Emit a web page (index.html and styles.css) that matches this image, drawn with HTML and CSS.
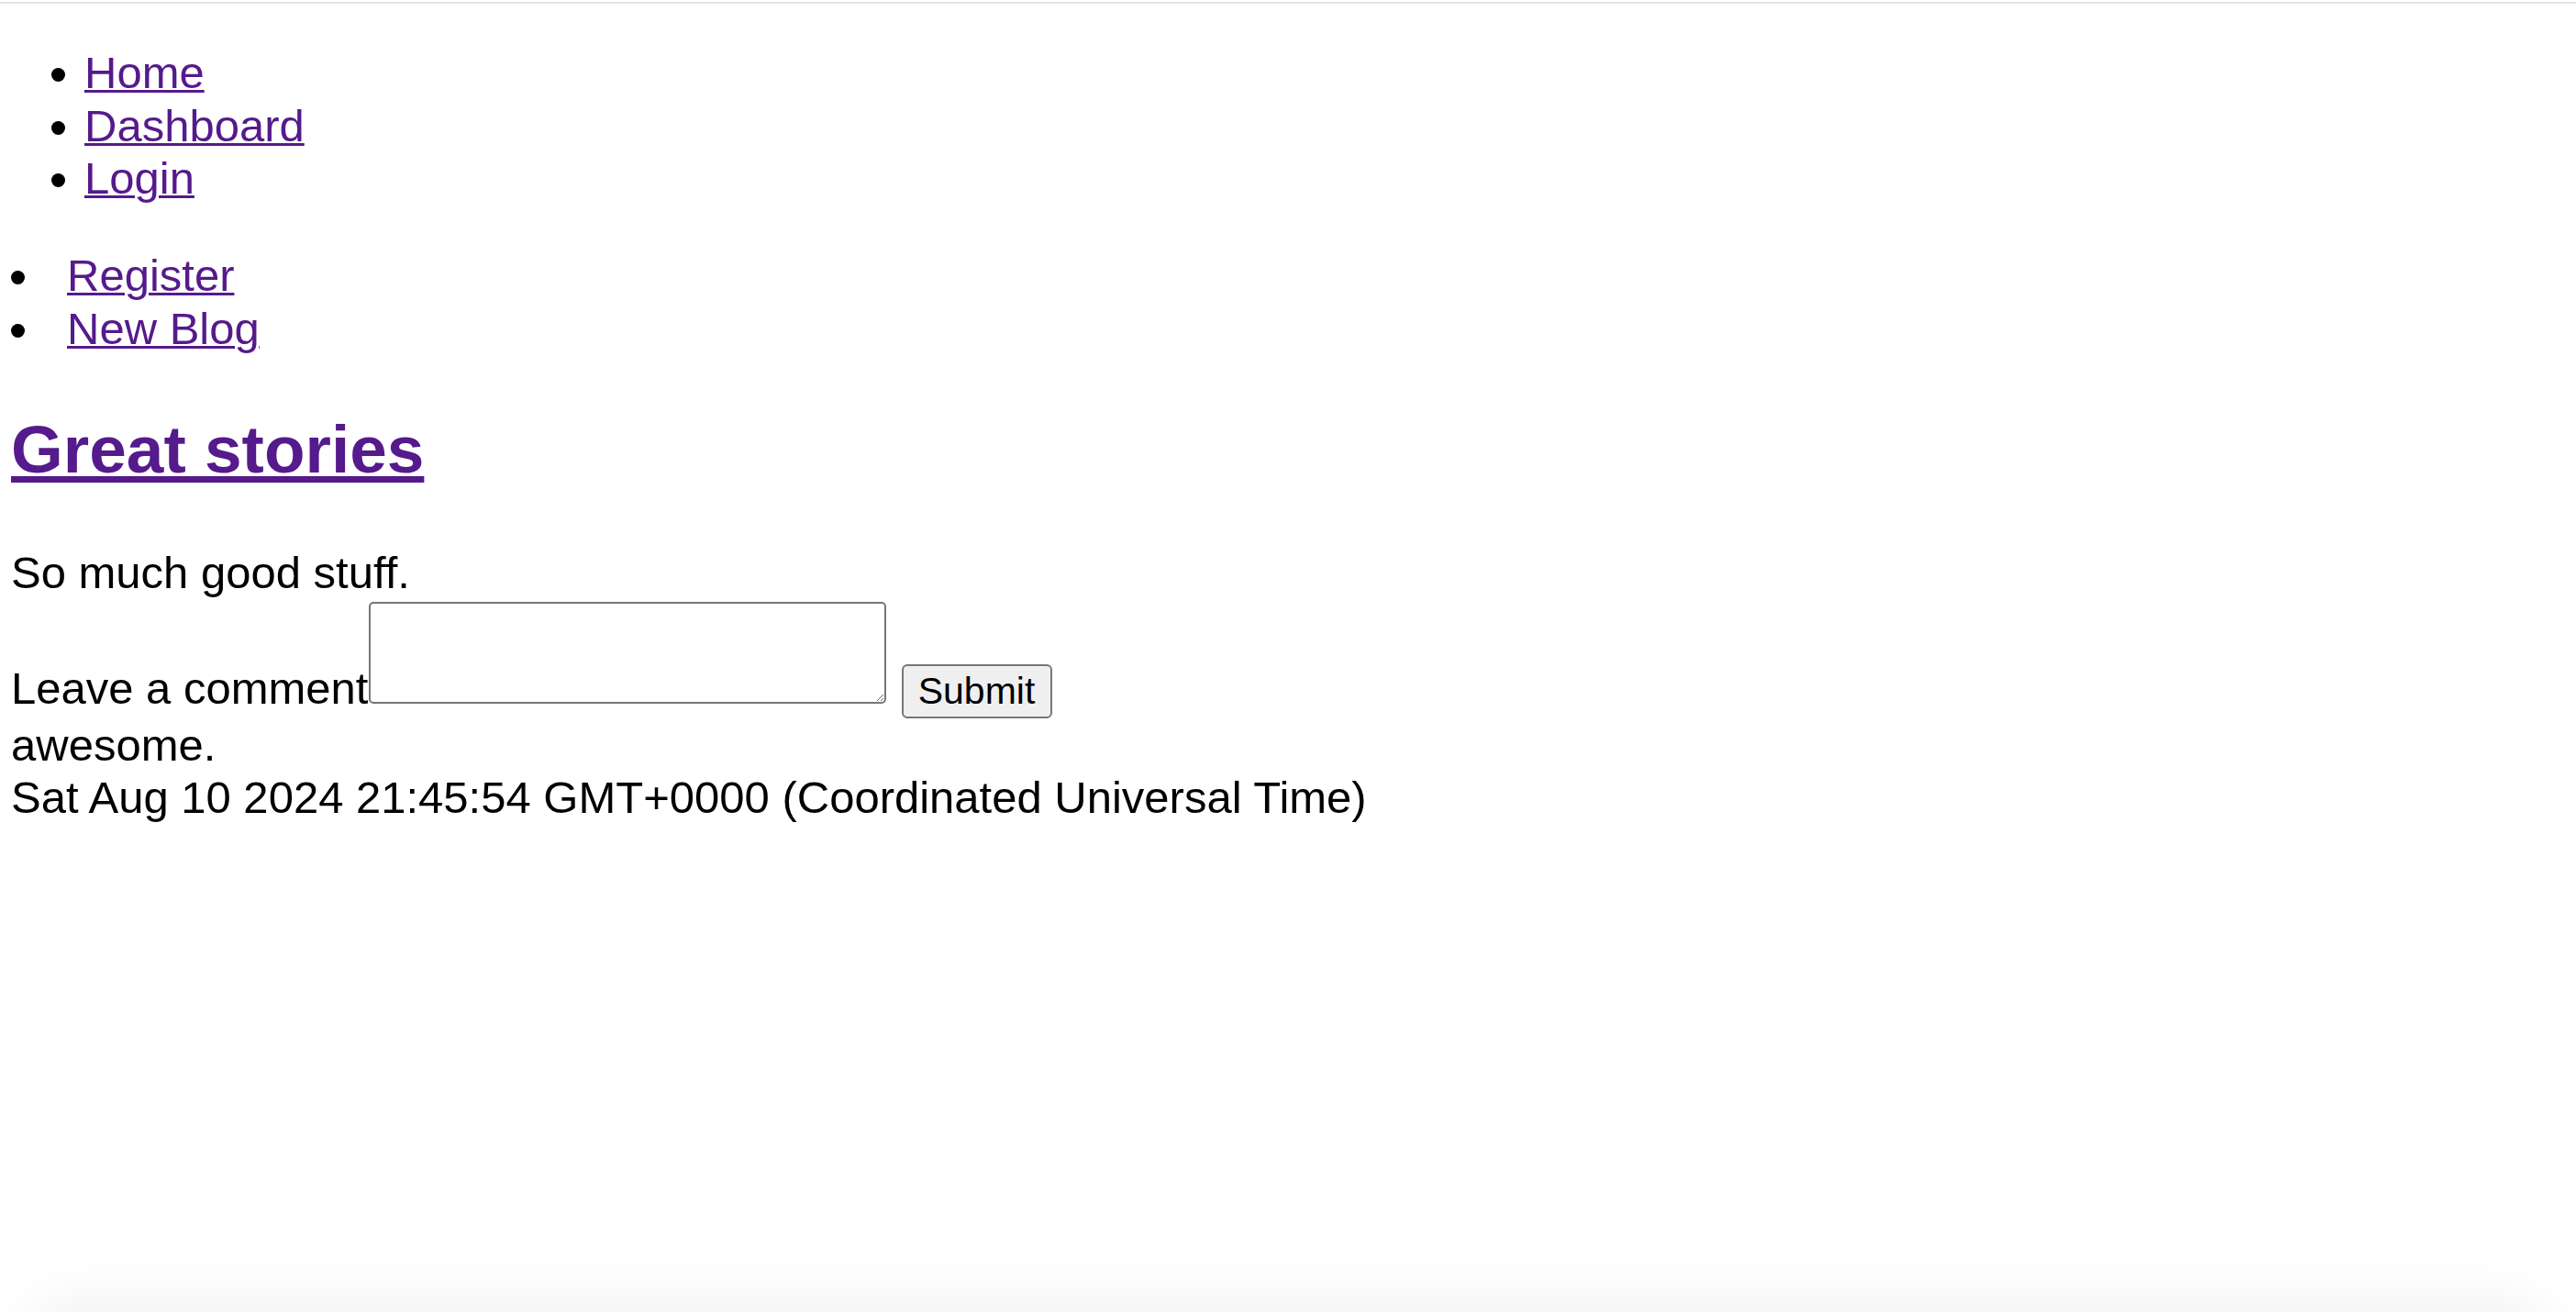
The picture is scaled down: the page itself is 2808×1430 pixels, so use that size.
FILE: index.html
```html
<!DOCTYPE html>
<html lang="en">
<head>
<meta charset="utf-8">
<title>Great stories</title>
<link rel="stylesheet" href="styles.css">
</head>
<body>
<div class="topline"></div>
<ul class="nav">
  <li><a href="#">Home</a></li>
  <li><a href="#">Dashboard</a></li>
  <li><a href="#">Login</a></li>
</ul>
<ul class="nav2">
  <li><a href="#">Register</a></li>
  <li><a href="#">New Blog</a></li>
</ul>
<h1 class="title"><a href="#">Great stories</a></h1>
<p class="desc">So much good stuff.</p>
<form class="comment-form">Leave a comment<textarea class="comment-box"></textarea><button type="button" class="submit">Submit</button></form>
<div class="comments">awesome.<br>Sat Aug 10 2024 21:45:54 GMT+0000 (Coordinated Universal Time)</div>
<div class="shade"></div>
</body>
</html>
```
FILE: styles.css
```css
html, body {
  background: #ffffff;
}
body {
  margin: 0;
  padding: 0 12px;
  font-family: "Liberation Sans", Arial, Helvetica, sans-serif;
  font-size: 49px;
  line-height: 57.5px;
  color: #000000;
}
a {
  color: #551a8b;
  text-decoration: underline;
  text-decoration-thickness: 3.4px;
  text-underline-offset: 2px;
}
.topline {
  margin: 2px -12px 0;
  height: 2px;
  background: #e3e3e3;
}
.nav {
  margin: 47px 0 0;
  padding-left: 80px;
}
.nav2 {
  margin: 48.5px 0 0;
  padding-left: 0;
  list-style-position: inside;
}
.nav2 a {
  margin-left: -4px;
}
.title {
  margin: 60px 0 0;
  font-size: 73px;
  line-height: 86px;
  font-weight: bold;
}
.title a {
  text-decoration-thickness: 7px;
  text-underline-offset: 4px;
}
.desc {
  margin: 63px 0 0;
}
.comment-form {
  margin: 2px 0 0;
}
.comment-box {
  box-sizing: border-box;
  width: 564px;
  height: 111px;
  margin: 0;
  padding: 4px;
  border: 2px solid #767676;
  border-radius: 5px;
  vertical-align: baseline;
  font-family: "Liberation Mono", monospace;
  font-size: 26px;
}
.submit {
  box-sizing: border-box;
  width: 164px;
  height: 59px;
  margin: 0 0 0 17px;
  padding: 0;
  border: 2px solid #767676;
  border-radius: 6px;
  background: #efefef;
  color: #000000;
  font-family: "Liberation Sans", Arial, Helvetica, sans-serif;
  font-size: 41px;
  line-height: 45px;
  vertical-align: baseline;
}
.comments {
  margin: 1px 0 0;
}
.shade {
  position: fixed;
  left: 40px;
  right: 40px;
  top: 100%;
  height: 100px;
  border-radius: 60px;
  box-shadow: 0 0 60px 14px rgba(0, 0, 0, 0.06);
  pointer-events: none;
}
```
